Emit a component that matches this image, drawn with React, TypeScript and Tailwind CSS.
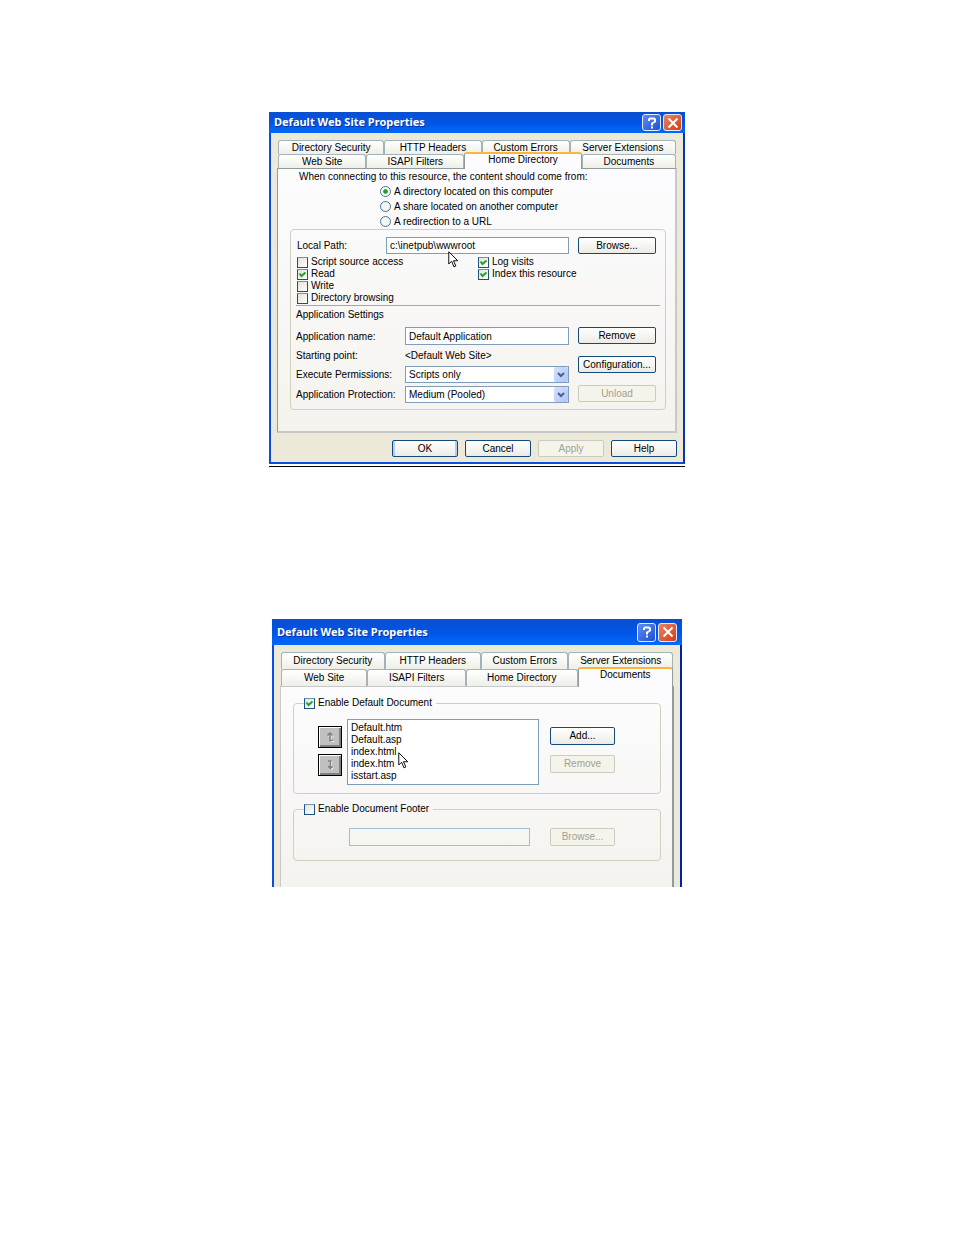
import { ReactNode, useState } from "react";
import clsx from "clsx";

interface Tab {
    label: string;
    active?: boolean;
}

const homeTabs: Tab[] = [
    { label: "Web Site" },
    { label: "ISAPI Filters" },
    { label: "Home Directory", active: true },
    { label: "Documents" }
];

const documentTabs: Tab[] = [
    { label: "Web Site" },
    { label: "ISAPI Filters" },
    { label: "Home Directory" },
    { label: "Documents", active: true }
];

const backTabs: Tab[] = [
    { label: "Directory Security" },
    { label: "HTTP Headers" },
    { label: "Custom Errors" },
    { label: "Server Extensions" }
];

const sources = [
    "A directory located on this computer",
    "A share located on another computer",
    "A redirection to a URL"
];

const documents = ["Default.htm", "Default.asp", "index.html", "index.htm", "isstart.asp"];

function TitleBar({ tall }: { tall?: boolean }) {
    const button = clsx(
        "flex w-[19px] items-center justify-center rounded-[3px] border border-[#e3ebfc]",
        tall ? "h-[19px]" : "h-[17px]"
    );

    return (
        <header
            className={clsx(
                "flex items-center gap-0.5 bg-linear-to-b from-[#0a4fd0] via-[#0055e5] to-[#0468fb] pl-[5px]",
                tall ? "h-[26px] pr-[5px]" : "h-[21px] pr-[3px]"
            )}
        >
            <h2 className="flex-1 font-['Noto_Sans','Open_Sans',sans-serif] text-[11px] font-bold whitespace-nowrap text-white [text-shadow:1px_1px_0_#0a2f9c]">
                Default Web Site Properties
            </h2>
            <button
                type="button"
                aria-label="Help"
                className={clsx(button, "bg-linear-to-br from-[#5f8cf5] to-[#1c4fd6]")}
            >
                <svg viewBox="0 0 12 12" className="size-3" fill="none" stroke="#fff" strokeWidth="2">
                    <path d="M3 4V2.500L4 1.500h4l1 1v2L6 6.500V8.500M6 9.500v2" />
                </svg>
            </button>
            <button
                type="button"
                aria-label="Close"
                className={clsx(button, "bg-linear-to-br from-[#ee8260] to-[#d13a10]")}
            >
                <svg viewBox="0 0 12 12" className="size-3" stroke="#fff" strokeWidth="2">
                    <path d="M1.500 1.500l9 9M10.500 1.500l-9 9" />
                </svg>
            </button>
        </header>
    );
}

function TabRow({ tabs, columns, tall }: { tabs: Tab[]; columns: string; tall?: boolean }) {
    return (
        <div role="tablist" className={clsx("grid px-px", columns, tall ? "h-[17px]" : "h-[14px]")}>
            {tabs.map((tab) => (
                <button
                    key={tab.label}
                    type="button"
                    role="tab"
                    aria-selected={!!tab.active}
                    className={clsx(
                        "flex justify-center rounded-t-[3px] border-x leading-3 whitespace-nowrap",
                        tab.active
                            ? "relative z-10 -mt-0.5 -mb-px items-start border-t-2 border-x-[#919b9c] border-t-[#fcb73a] bg-[#fcfcfe]"
                            : "items-center border-t border-[#a3b3b8] bg-linear-to-b from-white to-[#efefe8]"
                    )}
                >
                    {tab.label}
                </button>
            ))}
        </div>
    );
}

function PushButton({ children, className, disabled, isDefault }: {
    children: ReactNode;
    className?: string;
    disabled?: boolean;
    isDefault?: boolean;
}) {
    return (
        <button
            type="button"
            disabled={disabled}
            className={clsx(
                "flex items-center justify-center rounded-xs border leading-3",
                disabled
                    ? "border-[#cccbbd] bg-[#f5f4ea] text-[#a1a192]"
                    : "border-[#134a7c] bg-linear-to-b from-white to-[#ecebe5]",
                isDefault && "shadow-[inset_2px_0_0_#b4ccf5,inset_-2px_0_0_#b4ccf5]",
                className
            )}
        >
            {children}
        </button>
    );
}

function CheckBox({ label, checked }: { label: string; checked?: boolean }) {
    return (
        <label className="flex h-3 items-center gap-[3px] leading-3 whitespace-nowrap">
            <span className="relative size-[11px] shrink-0">
                <input
                    type="checkbox"
                    defaultChecked={checked}
                    className="peer block size-[11px] appearance-none border border-[#1c5180] border-t-[#6f93b3] bg-linear-to-br from-[#e2e2dc] to-white"
                />
                <svg
                    viewBox="0 0 11 11"
                    className="pointer-events-none absolute inset-0 hidden peer-checked:block"
                    fill="none"
                    stroke="#21a121"
                    strokeWidth="2"
                >
                    <path d="M2.500 4.500L4.500 7L8.500 3.500" />
                </svg>
            </span>
            {label}
        </label>
    );
}

function DropDown({ id, value }: { id: string; value: string }) {
    return (
        <div className="relative h-[17px]">
            <select
                id={id}
                className="block h-full w-full appearance-none border border-[#7f9db9] bg-white px-[3px] leading-3"
            >
                <option>{value}</option>
            </select>
            <span className="pointer-events-none absolute inset-y-px right-px flex w-[14px] items-center justify-center rounded-xs bg-linear-to-br from-[#d3e0fd] to-[#aec6f7]">
                <svg viewBox="0 0 8 6" className="h-1.5 w-2" fill="none" stroke="#4d6185" strokeWidth="2">
                    <path d="M1 1l3 3l3-3" />
                </svg>
            </span>
        </div>
    );
}

function Pointer({ className }: { className: string }) {
    return (
        <svg
            viewBox="0 0 11 18"
            className={clsx("pointer-events-none absolute z-10 h-[17px] w-[11px]", className)}
            fill="#fff"
            stroke="#000"
        >
            <path d="M.5.8v13l3-3l2.500 6l2-1l-2.500-5.500h4.500z" />
        </svg>
    );
}

function HomeDirectoryDialog() {
    const [source, setSource] = useState(sources[0]);

    return (
        <section className="w-full max-w-[416px]">
            <TitleBar />
            <div className="border-2 border-t-0 border-[#0a4fdc] border-r-[#0831b8] bg-[#ece9d8] px-1.5 pt-[7px] pb-[5px]">
                <TabRow tabs={backTabs} columns="grid-cols-[106fr_97fr_88fr_106fr]" />
                <TabRow tabs={homeTabs} columns="grid-cols-[88fr_98fr_117fr_94fr]" />
                <div className="border border-r-2 border-b-2 border-[#919b9c] border-r-[#c5c9c9] border-b-[#c5c9c9] bg-linear-to-b from-[#fcfcfe] to-[#f4f3ee] pb-[21px]">
                    <div role="radiogroup" aria-labelledby="source-label" className="leading-[15px]">
                        <p id="source-label" className="pl-[21px]">
                            When connecting to this resource, the content should come from:
                        </p>
                        {sources.map((item) => (
                            <label key={item} className="flex items-center gap-[3px] pl-[102px]">
                                <input
                                    type="radio"
                                    name="source"
                                    checked={source === item}
                                    onChange={() => setSource(item)}
                                    className="size-[11px] appearance-none rounded-full border border-[#4d7396] bg-[#f4f6f4] checked:bg-radial checked:from-[#21a121] checked:from-30% checked:to-white checked:to-45%"
                                />
                                {item}
                            </label>
                        ))}
                    </div>

                    <div className="mr-[9px] ml-3 rounded-sm border border-[#d0d0bf] pt-[7px] pb-1.5">
                        <div className="flex h-[17px] items-center pr-[9px] pl-1.5">
                            <label htmlFor="local-path" className="w-[89px]">
                                Local Path:
                            </label>
                            <div className="relative mr-[9px] h-full flex-1">
                                <input
                                    id="local-path"
                                    type="text"
                                    defaultValue="c:\inetpub\wwwroot"
                                    className="block h-full w-full border border-[#7f9db9] bg-white px-[3px]"
                                />
                                <Pointer className="top-[14px] left-[62px]" />
                            </div>
                            <PushButton className="h-[17px] w-[78px]">Browse...</PushButton>
                        </div>

                        <div className="mt-0.5 grid grid-cols-[181px_1fr] pl-1.5">
                            <div>
                                <CheckBox label="Script source access" />
                                <CheckBox label="Read" checked />
                                <CheckBox label="Write" />
                                <CheckBox label="Directory browsing" />
                            </div>
                            <div>
                                <CheckBox label="Log visits" checked />
                                <CheckBox label="Index this resource" checked />
                            </div>
                        </div>

                        <hr className="mx-[5px] my-px border-[#aca899]" />
                        <h3 className="pl-[5px] leading-[15px]">Application Settings</h3>

                        <div className="mt-[5px] flex gap-[9px] pr-[9px] pl-[5px]">
                            <div className="grid flex-1 grid-cols-[109px_1fr] items-center gap-y-[3px]">
                                <label htmlFor="app-name">Application name:</label>
                                <input
                                    id="app-name"
                                    type="text"
                                    defaultValue="Default Application"
                                    className="h-[18px] w-full border border-[#7f9db9] bg-white px-[3px]"
                                />
                                <span className="leading-[15px]">Starting point:</span>
                                <span className="leading-[15px]">&lt;Default Web Site&gt;</span>
                                <label htmlFor="permissions">Execute Permissions:</label>
                                <DropDown id="permissions" value="Scripts only" />
                                <label htmlFor="protection">Application Protection:</label>
                                <DropDown id="protection" value="Medium (Pooled)" />
                            </div>
                            <div className="flex w-[78px] flex-col gap-3">
                                <PushButton className="h-[17px]">Remove</PushButton>
                                <PushButton className="h-[17px]">Configuration...</PushButton>
                                <PushButton className="h-[17px]" disabled>
                                    Unload
                                </PushButton>
                            </div>
                        </div>
                    </div>
                </div>

                <footer className="mt-[7px] flex justify-end gap-[7px]">
                    <PushButton className="h-[17px] w-[66px]" isDefault>
                        OK
                    </PushButton>
                    <PushButton className="h-[17px] w-[66px]">Cancel</PushButton>
                    <PushButton className="h-[17px] w-[66px]" disabled>
                        Apply
                    </PushButton>
                    <PushButton className="h-[17px] w-[66px]">Help</PushButton>
                </footer>
            </div>
            <div className="mt-0.5 h-px bg-black" />
        </section>
    );
}

function MoveButton({ label, down }: { label: string; down?: boolean }) {
    const arrow = down ? "M2 1h3.500M4.500 1v7.500M2 6l2.500 2.500L6.500 6.500" : "M1.500 3.500L4 1l2.500 2.500M4 1v7.500h3";

    return (
        <button
            type="button"
            aria-label={label}
            className="flex h-[22px] w-6 items-center justify-center border border-black bg-[#c0c0c0] shadow-[inset_1px_1px_0_#fff,inset_-2px_-2px_0_#808080]"
        >
            <svg viewBox="0 0 9 10" className="h-2.5 w-[9px]" fill="none">
                <path d={arrow} stroke="#fff" transform="translate(1 1)" />
                <path d={arrow} stroke="#808080" strokeWidth="1.500" />
            </svg>
        </button>
    );
}

function DocumentsDialog() {
    return (
        <section className="w-full max-w-[410px]">
            <TitleBar tall />
            <div className="border-x-2 border-[#0a4fdc] border-r-[#0022a8] bg-[#ece9d8] px-1.5 pt-[7px]">
                <TabRow tabs={backTabs} columns="grid-cols-[103fr_96fr_87fr_104fr]" tall />
                <TabRow tabs={documentTabs} columns="grid-cols-[86fr_98fr_111fr_95fr]" tall />
                <div className="border border-r-2 border-b-0 border-[#c5c9c9] border-r-[#919b9c] bg-linear-to-b from-[#fcfcfe] to-[#f4f3ee] pt-2.5 pr-[11px] pb-[26px] pl-3">
                    <fieldset className="rounded-sm border border-[#d0d0bf] pb-2">
                        <legend className="ml-2.5 pr-1">
                            <CheckBox label="Enable Default Document" checked />
                        </legend>
                        <div className="flex pt-2.5 pr-[45px] pl-6">
                            <div className="mr-[5px] flex flex-col gap-1.5 pt-[7px]">
                                <MoveButton label="Move up" />
                                <MoveButton label="Move down" down />
                            </div>
                            <div className="relative flex-1">
                                <select
                                    size={5}
                                    aria-label="Default documents"
                                    className="block h-[66px] w-full appearance-none overflow-hidden border border-[#7f9db9] bg-white py-0.5"
                                >
                                    {documents.map((name) => (
                                        <option key={name} className="h-3 min-h-0 px-[3px] py-0 leading-3">
                                            {name}
                                        </option>
                                    ))}
                                </select>
                                <Pointer className="top-[33px] left-[51px]" />
                            </div>
                            <div className="ml-[11px] flex w-[65px] flex-col gap-2.5 pt-2">
                                <PushButton className="h-[18px]">Add...</PushButton>
                                <PushButton className="h-[18px]" disabled>
                                    Remove
                                </PushButton>
                            </div>
                        </div>
                    </fieldset>

                    <fieldset className="mt-[9px] rounded-sm border border-[#d0d0bf] pb-[14px]">
                        <legend className="ml-2.5 pr-1">
                            <CheckBox label="Enable Document Footer" />
                        </legend>
                        <div className="flex gap-5 pt-[13px] pr-[45px] pl-[55px]">
                            <input
                                type="text"
                                aria-label="Footer file"
                                disabled
                                className="h-[18px] min-w-0 flex-1 border border-[#a5bdd3] bg-transparent px-[3px]"
                            />
                            <PushButton className="h-[18px] w-[65px]" disabled>
                                Browse...
                            </PushButton>
                        </div>
                    </fieldset>
                </div>
            </div>
        </section>
    );
}

function App() {
    return (
        <main className="flex min-h-screen flex-col items-center gap-[152px] bg-white pt-28 pb-16 font-['Liberation_Sans',Arial,sans-serif] text-[10px] text-black">
            <HomeDirectoryDialog />
            <DocumentsDialog />
        </main>
    );
}

export default App;
